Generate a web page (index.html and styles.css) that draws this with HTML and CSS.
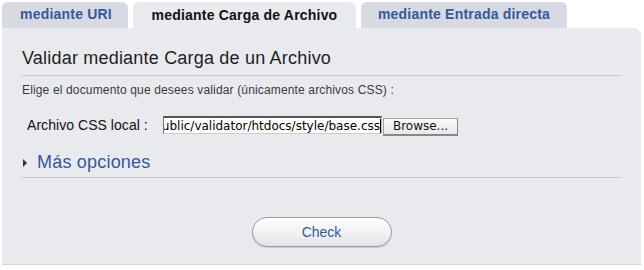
FILE: index.html
```html
<!DOCTYPE html>
<html lang="es">
<head>
<meta charset="utf-8">
<title>Validar mediante Carga de un Archivo</title>
<link rel="stylesheet" href="styles.css">
</head>
<body>
<div class="wrap">
  <div class="tabs">
    <div class="tab tab-uri">mediante URI</div>
    <div class="tab tab-upload active">mediante Carga de Archivo</div>
    <div class="tab tab-input">mediante Entrada directa</div>
  </div>
  <div class="panel">
    <h2 class="title">Validar mediante Carga de un Archivo</h2>
    <p class="desc">Elige el documento que desees validar (únicamente archivos CSS) :</p>
    <div class="row">
      <span class="label">Archivo CSS local :</span>
      <div class="file"><span class="file-text">ublic/validator/htdocs/style/base.css</span><span class="caret"></span></div>
      <div class="browse">Browse...</div>
    </div>
    <div class="more"><span class="tri"></span><span class="more-text">Más opciones</span></div>
    <div class="actions"><div class="check">Check</div></div>
  </div>
</div>
</body>
</html>
```
FILE: styles.css
```css
html, body { margin: 0; padding: 0; background: #ffffff; }
body { font-family: "Liberation Sans", Arial, sans-serif; }
.wrap { padding: 2px 3px 0 2px; }
.tabs { display: flex; gap: 5px; height: 26px; }
.tab {
  height: 26px; box-sizing: border-box;
  border-radius: 6px 6px 0 0;
  background: #d7dae3;
  color: #35599b;
  font-weight: bold; font-size: 14px; letter-spacing: 0.2px;
  display: flex; align-items: center; justify-content: center;
  padding-bottom: 1px;
  border-bottom: 1px solid #dcdde2;
}
.tab.active { background: #e9eaee; color: #111111; border-bottom: none; }
.tab-uri { width: 126px; padding-left: 2px; }
.tab-upload { width: 223px; }
.tab-input { width: 206px; }
.panel {
  background: #e9eaee;
  border-radius: 0 7px 0 0;
  padding: 0 20px 17px 20px;
  border-bottom: 1px solid #d2d3d8;
}
.title {
  margin: 0; padding: 20px 0 7px 0;
  font-size: 18px; line-height: 20px; font-weight: normal; color: #1e1e1e;
  border-bottom: 1px solid #c9cacf;
  letter-spacing: 0.2px;
}
.desc { margin: 7px 0 0 0; font-size: 12px; line-height: 15px; color: #3a3a3a; letter-spacing: 0.15px; }
.row { display: flex; align-items: center; margin-top: 18px; height: 18px; padding-left: 5px; }
.label { font-size: 14px; color: #111; width: 136px; letter-spacing: 0.05px; }
.file {
  width: 219px; height: 18px; box-sizing: border-box;
  background: #fff;
  border-top: 2px solid #555; border-left: 1px solid #777; border-right: 1px solid #bbb; border-bottom: 1px solid #ccc;
  display: flex; justify-content: flex-end; align-items: center; overflow: hidden;
  white-space: nowrap;
  font-family: "DejaVu Sans", sans-serif; font-size: 12px; color: #000;
}
.caret { width: 1px; height: 14px; background: #000; flex: none; }
.browse {
  width: 75px; height: 18px; box-sizing: border-box; margin-left: 1px; margin-top: 3px;
  background: linear-gradient(#fbfbfb, #e8e8e8);
  border: 1px solid #a5a5a5; border-right-color: #888; border-bottom: 2px solid #888;
  font-family: "DejaVu Sans", sans-serif; font-size: 12px; color: #111;
  display: flex; align-items: center; justify-content: center;
}
.more {
  margin-top: 18px; display: flex; align-items: center;
  padding-bottom: 5px; border-bottom: 1px solid #c9cacf;
  line-height: 20px;
}
.tri {
  width: 0; height: 0; margin-left: 1px; margin-right: 10px; margin-top: 2px;
  border-top: 4px solid transparent; border-bottom: 4px solid transparent; border-left: 4px solid #333;
}
.more-text { font-size: 18px; color: #36579a; letter-spacing: 0.2px; }
.actions { display: flex; justify-content: center; margin-top: 39px; }
.check {
  width: 140px; height: 30px; box-sizing: border-box;
  border: 1px solid #9a9a9e; border-radius: 15px;
  background: linear-gradient(#ffffff, #f3f3f5 50%, #e3e3e6);
  box-shadow: 0 1px 1px rgba(0,0,0,0.15);
  color: #33589a; font-size: 14px;
  display: flex; align-items: center; justify-content: center;
}
```
